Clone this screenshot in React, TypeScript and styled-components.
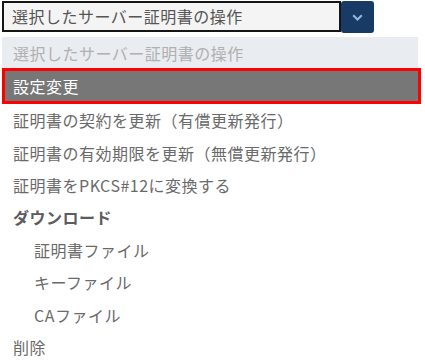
import React from "react";
import styled, { createGlobalStyle } from "styled-components";

const Global = createGlobalStyle`
  body { margin: 0; background: #fff; font-family: "Noto Sans CJK JP", "Noto Sans", sans-serif; }
`;

const Page = styled.div`
  padding: 1px 0 0 2px;
`;

const SelectRow = styled.div`
  display: flex;
  align-items: flex-start;
  width: 372px;
`;

const SelectBox = styled.div`
  box-sizing: border-box;
  width: 339px;
  height: 31px;
  border: 2px solid #151515;
  background: #f4f4f4;
  color: #555;
  font-size: 16px;
  letter-spacing: 0.5px;
  line-height: 27px;
  padding-left: 8px;
  white-space: nowrap;
`;

const ArrowButton = styled.div`
  width: 33px;
  height: 32px;
  background: #173b64;
  border-radius: 3px;
  display: flex;
  align-items: center;
  justify-content: center;
`;

const List = styled.div`
  margin-top: 4px;
  width: 416px;
  display: flex;
  flex-direction: column;
`;

const Option = styled.div<{ $indent?: boolean; $bold?: boolean }>`
  box-sizing: border-box;
  height: 32.4px;
  display: flex;
  align-items: center;
  padding-left: ${(p) => (p.$indent ? 32 : 11)}px;
  font-size: 16px;
  letter-spacing: 0.5px;
  color: ${(p) => (p.$bold ? "#5c5c5c" : "#6a6a6a")};
  font-weight: ${(p) => (p.$bold ? 700 : 400)};
  white-space: nowrap;
`;

const Placeholder = styled(Option)`
  height: 31px;
  background: #e9ecf0;
  color: #b0b0b0;
`;

const Selected = styled(Option)`
  height: 36px;
  width: 419px;
  border: 3px solid #ff0000;
  background: #777777;
  color: #fff;
  padding-left: 8px;
`;

export default function App() {
  return (
    <>
      <Global />
      <Page>
        <SelectRow>
          <SelectBox>選択したサーバー証明書の操作</SelectBox>
          <ArrowButton>
            <svg width="11" height="7" viewBox="0 0 11 7">
              <path d="M1.2 1.2 L5.5 5.5 L9.8 1.2" fill="none" stroke="#8fb9e2" strokeWidth="2" />
            </svg>
          </ArrowButton>
        </SelectRow>
        <List>
          <Placeholder>選択したサーバー証明書の操作</Placeholder>
          <Selected>設定変更</Selected>
          <Option>証明書の契約を更新（有償更新発行）</Option>
          <Option>証明書の有効期限を更新（無償更新発行）</Option>
          <Option>証明書をPKCS#12に変換する</Option>
          <Option $bold>ダウンロード</Option>
          <Option $indent>証明書ファイル</Option>
          <Option $indent>キーファイル</Option>
          <Option $indent>CAファイル</Option>
          <Option>削除</Option>
        </List>
      </Page>
    </>
  );
}
